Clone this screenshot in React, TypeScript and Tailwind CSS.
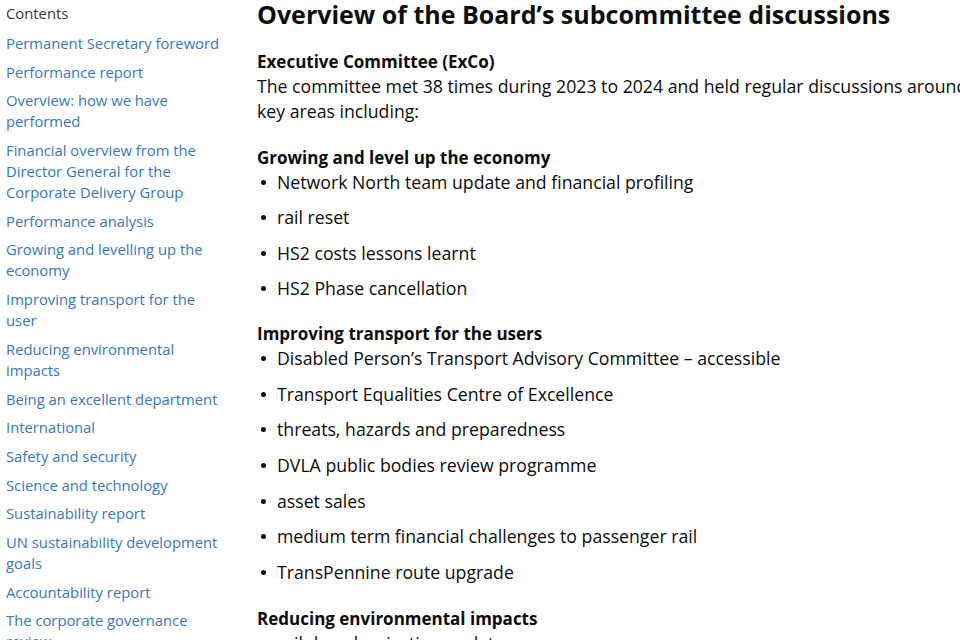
import React from "react";

const sidebar = [
  "Permanent Secretary foreword",
  "Performance report",
  "Overview: how we have performed",
  "Financial overview from the Director General for the Corporate Delivery Group",
  "Performance analysis",
  "Growing and levelling up the economy",
  "Improving transport for the user",
  "Reducing environmental impacts",
  "Being an excellent department",
  "International",
  "Safety and security",
  "Science and technology",
  "Sustainability report",
  "UN sustainability development goals",
  "Accountability report",
  "The corporate governance review",
];

const growing = [
  "Network North team update and financial profiling",
  "rail reset",
  "HS2 costs lessons learnt",
  "HS2 Phase cancellation",
];

const improving = [
  "Disabled Person\u2019s Transport Advisory Committee \u2013 accessible",
  "Transport Equalities Centre of Excellence",
  "threats, hazards and preparedness",
  "DVLA public bodies review programme",
  "asset sales",
  "medium term financial challenges to passenger rail",
  "TransPennine route upgrade",
];

function Bullets({ items }: { items: string[] }) {
  return (
    <ul className="flex flex-col gap-[10.6px]">
      {items.map((t) => (
        <li key={t} className="flex items-center leading-[25px] text-[17.7px]">
          <span className="w-[20px] shrink-0 flex pl-[4px]">
            <span className="w-[5px] h-[5px] rounded-full bg-[#0b0c0c]" />
          </span>
          <span>{t}</span>
        </li>
      ))}
    </ul>
  );
}

export default function App() {
  return (
    <div
      className="w-[960px] h-[640px] overflow-hidden bg-white flex gap-[29px]"
      style={{ fontFamily: "'Open Sans', 'Noto Sans', sans-serif" }}
    >
      <nav className="w-[228px] shrink-0 pl-[6px] pt-[3px]">
        <div className="text-[14.8px] leading-[21px] text-[#383838]">Contents</div>
        <ul className="mt-[9px] flex flex-col gap-[7.7px]">
          {sidebar.map((s) => (
            <li key={s} className="text-[14.8px] leading-[21px] text-[#3479bf]">
              {s}
            </li>
          ))}
        </ul>
      </nav>
      <main className="w-[755px] shrink-0 text-[#0b0c0c] text-[17px]">
        <h1 className="text-[25px] leading-[28px] font-bold">
          Overview of the Board’s subcommittee discussions
        </h1>
        <h3 className="mt-[20.5px] font-bold leading-[25px]">Executive Committee (ExCo)</h3>
        <p className="leading-[25px] text-[17.7px]">
          The committee met 38 times during 2023 to 2024 and held regular discussions around the
          key areas including:
        </p>
        <h3 className="mt-[21px] font-bold leading-[25px]">Growing and level up the economy</h3>
        <Bullets items={growing} />
        <h3 className="mt-[20px] font-bold leading-[25px]">Improving transport for the users</h3>
        <Bullets items={improving} />
        <h3 className="mt-[21px] font-bold leading-[25px]">Reducing environmental impacts</h3>
        <Bullets items={["rail decarbonisation update"]} />
      </main>
    </div>
  );
}
